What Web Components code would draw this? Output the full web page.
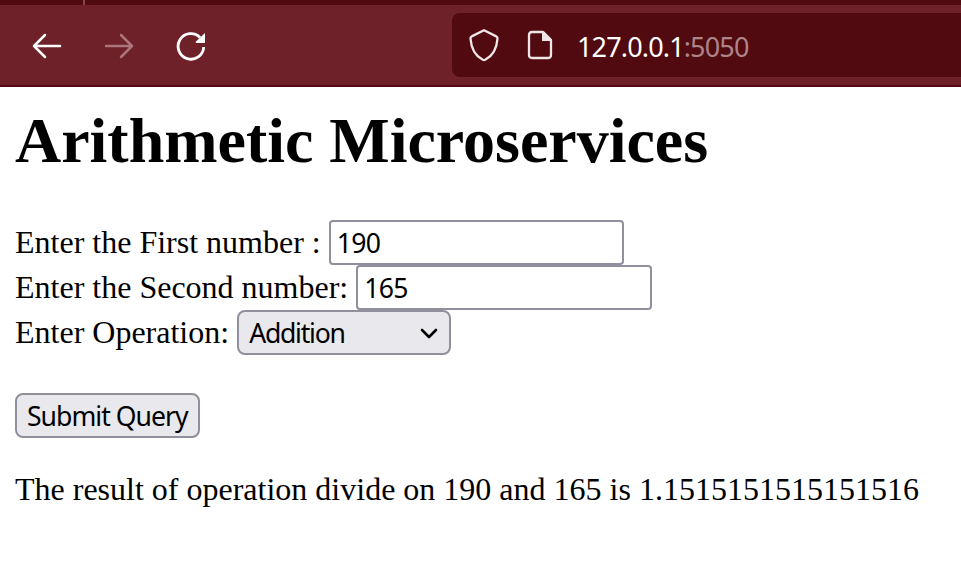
<!DOCTYPE html>
<html lang="en">
<head>
<meta charset="utf-8">
<title>Arithmetic Microservices</title>
<style>
html,body{margin:0;background:#fff;overflow:hidden}
body{width:961px;height:578px;font-family:"Liberation Serif",serif;color:#000}
</style>
</head>
<body>
<browser-bar host="127.0.0.1" port=":5050"></browser-bar>
<arithmetic-page></arithmetic-page>
<script>
class BrowserBar extends HTMLElement{
  connectedCallback(){
    this.attachShadow({mode:'open'}).innerHTML=`
<style>
:host{display:block;height:87px;box-sizing:border-box;background:#6e2128;border-bottom:2px solid #500a10}
.tabs{height:5px;background:#500a10;display:flex}
.tabs i{margin-left:83px;width:2px;background:#80484d}
.bar{height:80px;display:flex;align-items:center}
nav{display:flex;gap:40px;padding-left:31px;width:421px;box-sizing:content-box}
svg{display:block;fill:none;stroke-linecap:round;stroke-linejoin:round;flex:none}
.url{flex:1;height:64px;border-radius:8px 0 0 8px;background:#500a10;display:flex;align-items:center;color:#fff;font:27px/64px "Noto Sans",sans-serif}
.text{margin-left:23px;padding-top:4px;line-height:60px;white-space:pre;letter-spacing:-.85px}
.text span{color:#ad8588}
</style>
<div class="tabs"><i></i></div>
<div class="bar">
<nav>
<svg width="32" height="32" viewBox="0 0 32 32" stroke="#fff" stroke-width="2.5"><path d="M29 17H3M14 6L3 17L14 28"/></svg>
<svg width="32" height="32" viewBox="0 0 32 32" stroke="#ad757b" stroke-width="2.5"><path d="M3 17H29M18 6L29 17L18 28"/></svg>
<svg width="32" height="32" viewBox="0 0 32 32" stroke="#fff" stroke-width="2.8"><path d="M28.7 18A12.8 12.8 0 1 1 25 8.4" stroke-linecap="butt"/><path d="M30 4V14H21.5Q20 13.6 21 12.4Z" fill="#fff" stroke="none"/></svg>
</nav>
<div class="url">
<svg style="margin-left:16px" width="32" height="34" viewBox="0 0 32 34" stroke="#eee5e6" stroke-width="2.3"><path d="M16 2.2L28.3 8.4Q29.6 9.1 29.5 10.6C28.8 20.5 25.5 27.5 17.2 31.8Q16 32.4 14.8 31.8C6.5 27.5 3.2 20.5 2.5 10.6Q2.4 9.1 3.7 8.4Z"/></svg>
<svg style="margin-left:26px" width="28" height="32" viewBox="0 0 28 32" stroke="#eee5e6" stroke-width="2.3"><path d="M6 3H17L25 11V26Q25 29 22 29H6Q3 29 3 26V6Q3 3 6 3"/><path d="M16 2.5V12H26V10.5L18 2.5Z" fill="#eee5e6" stroke="none"/></svg>
<div class="text">${this.getAttribute('host')}<span>${this.getAttribute('port')}</span></div>
</div>
</div>`;
  }
}
customElements.define('browser-bar',BrowserBar);

class FieldRow extends HTMLElement{
  connectedCallback(){
    this.attachShadow({mode:'open'}).innerHTML=`
<style>
:host{display:flex;height:45px;align-items:center;gap:8px;font-size:32px;line-height:45px;white-space:pre}
</style><slot name="label"></slot><slot></slot>`;
  }
}
customElements.define('field-row',FieldRow);

const CONTROL=`
:host{display:flex;align-items:center;box-sizing:border-box;height:45px;border:2px solid #8f8f9d;font:26.6px/40px "Noto Sans",sans-serif;letter-spacing:-.75px;white-space:pre;flex:none}`;

class NumberField extends HTMLElement{
  connectedCallback(){
    this.attachShadow({mode:'open'}).innerHTML=`<style>${CONTROL}
:host{width:295px;border-radius:4px;padding-left:6px;background:#fff}
:host([wide]){width:296px}</style><slot></slot>`;
  }
}
customElements.define('number-field',NumberField);

class OperationSelect extends HTMLElement{
  connectedCallback(){
    this.attachShadow({mode:'open'}).innerHTML=`<style>${CONTROL}
:host{width:214px;border-radius:8px;padding:0 10px;background:#e9e9ed;justify-content:space-between;letter-spacing:-1.25px}
svg{display:block}</style><span><slot></slot></span>
<svg width="20" height="20" viewBox="0 0 20 20" fill="none" stroke="#000" stroke-width="2.6" stroke-linecap="round" stroke-linejoin="round"><path d="M3 7L10 14L17 7"/></svg>`;
  }
}
customElements.define('operation-select',OperationSelect);

class SubmitButton extends HTMLElement{
  connectedCallback(){
    this.attachShadow({mode:'open'}).innerHTML=`<style>${CONTROL}
:host{width:185px;border-radius:8px;padding-left:10px;background:#e9e9ed;letter-spacing:-.98px}</style><slot></slot>`;
  }
}
customElements.define('submit-button',SubmitButton);

class ArithmeticPage extends HTMLElement{
  connectedCallback(){
    this.attachShadow({mode:'open'}).innerHTML=`
<style>
:host{display:block;padding:17px 0 0 15px}
h1{margin:0 0 42px;font-size:64px;line-height:74px;font-weight:bold;white-space:pre;letter-spacing:-.02px}
submit-button{margin-top:38px}
p{margin:33px 0 0;font-size:32px;line-height:37px;white-space:pre}
</style>
<h1>Arithmetic Microservices</h1>
<field-row><span slot="label">Enter the First number :</span><number-field>190</number-field></field-row>
<field-row><span slot="label">Enter the Second number:</span><number-field wide>165</number-field></field-row>
<field-row><span slot="label">Enter Operation:</span><operation-select>Addition</operation-select></field-row>
<submit-button>Submit Query</submit-button>
<p>The result of operation divide on 190 and 165 is 1.1515151515151516</p>`;
  }
}
customElements.define('arithmetic-page',ArithmeticPage);
</script>
</body>
</html>
